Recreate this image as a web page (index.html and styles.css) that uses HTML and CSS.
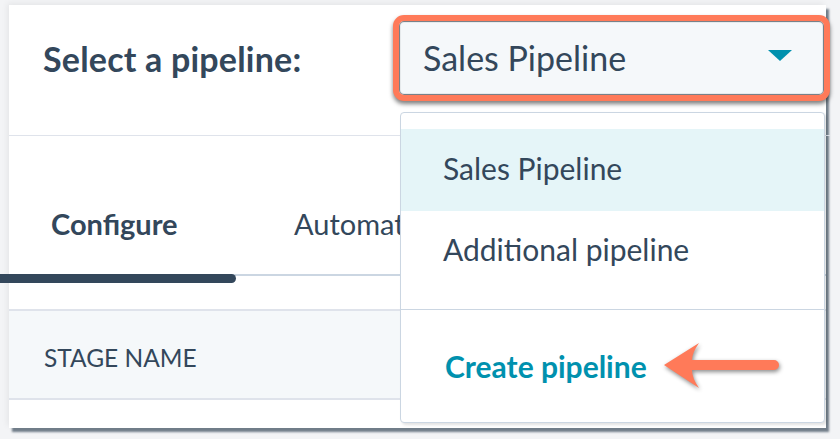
FILE: index.html
```html
<!DOCTYPE html>
<html>
<head>
<meta charset="utf-8">
<link rel="stylesheet" href="styles.css">
</head>
<body>
<div class="card">
  <div class="header">
    <div class="label">Select a pipeline:</div>
    <div class="select">
      <span class="select-text">Sales Pipeline</span>
      <svg class="caret" width="24" height="11" viewBox="0 0 24 11"><path d="M0 0 H24 L12 11 Z" fill="#0091ae"/></svg>
    </div>
  </div>
  <div class="tabs">
    <div class="tab active">Configure</div>
    <div class="tab">Automate</div>
  </div>
  <div class="tabline"><div class="tabbar"></div></div>
  <div class="table-head">STAGE NAME</div>

  <div class="dropdown">
    <div class="options">
      <div class="option selected">Sales Pipeline</div>
      <div class="option">Additional pipeline</div>
    </div>
    <div class="create">Create pipeline</div>
  </div>
  <svg class="arrow" width="124" height="64" viewBox="0 0 124 64">
    <path d="M3 27 L38 5 Q31 15 31 22 L113 22 A5 5 0 0 1 113 32 L31 32 Q31 40 38 50 Z" fill="#ff7a59"/>
  </svg>
</div>
</body>
</html>
```
FILE: styles.css
```css
* { box-sizing: border-box; }
html, body { margin: 0; padding: 0; }
body {
  width: 840px;
  height: 439px;
  background: #f3f4f6;
  overflow: hidden;
  font-family: Lato, "Open Sans", sans-serif;
  color: #33475b;
}
.card {
  position: relative;
  margin: 5px 0 0 9px;
  width: 817px;
  height: 423px;
  background: #fff;
  box-shadow: 3px 4px 2px rgba(70, 85, 100, 0.75), -2px -2px 6px rgba(0, 0, 0, 0.06);
}
.header {
  height: 131px;
  border-bottom: 1px solid #dfe3eb;
  display: flex;
  align-items: flex-start;
  justify-content: space-between;
  padding: 10px 0 0 34px;
  margin-right: -4px;
}
.label {
  font-size: 34px;
  font-weight: 700;
  margin-top: 23px;
  letter-spacing: 0.2px;
}
.select {
  width: 437px;
  height: 86px;
  border: 6px solid #ff7a59;
  border-radius: 11px;
  background: #f5f8fa;
  box-shadow: 0 3px 4px rgba(0, 0, 0, 0.5), inset 0 0 1px 1px rgba(50, 60, 70, 0.7);
  display: flex;
  align-items: center;
  justify-content: space-between;
  padding: 0 32px 0 24px;
}
.select-text {
  font-size: 34px;
  font-weight: 400;
  margin-top: -2px;
}
.caret { margin-top: -6px; }
.tabs {
  display: flex;
  height: 139px;
  align-items: center;
  padding: 0 0 0 42px;
}
.tab {
  font-size: 29px;
  font-weight: 400;
  margin-top: 36px;
}
.tab.active {
  font-weight: 700;
  width: 243px;
}
.tabline {
  position: relative;
  height: 2px;
  background: #cbd6e2;
  margin-left: -9px;
  margin-top: 3px;
}
.tabbar {
  width: 236px;
  height: 9px;
  margin-top: -4px;
  background: #33475b;
  border-radius: 0 5px 5px 0;
}
.table-head {
  margin-top: 33px;
  height: 91px;
  background: #f5f8fa;
  border-top: 2px solid #dfe3eb;
  border-bottom: 2px solid #dfe3eb;
  display: flex;
  align-items: center;
  padding-left: 35px;
  padding-top: 6px;
  font-size: 24.5px;
}
.dropdown {
  position: absolute;
  left: 391px;
  top: 107px;
  width: 425px;
  height: 311px;
  background: #fff;
  border: 1px solid #cbd6e2;
  border-radius: 4px;
  padding-top: 16px;
  box-shadow: 2px 2px 3px rgba(0, 0, 0, 0.12);
}
.options {
  border-bottom: 1px solid #cbd6e2;
  padding-bottom: 18px;
}
.option {
  height: 80px;
  display: flex;
  align-items: center;
  padding-left: 42px;
  padding-bottom: 4px;
  font-size: 30px;
}
.option.selected {
  background: #e5f5f8;
  height: 82px;
}
.create {
  padding: 38px 0 0 44px;
  font-size: 30px;
  font-weight: 700;
  color: #0091ae;
}
.arrow {
  position: absolute;
  left: 652px;
  top: 333px;
  filter: drop-shadow(1px 2px 2px rgba(0, 0, 0, 0.45));
}
```
